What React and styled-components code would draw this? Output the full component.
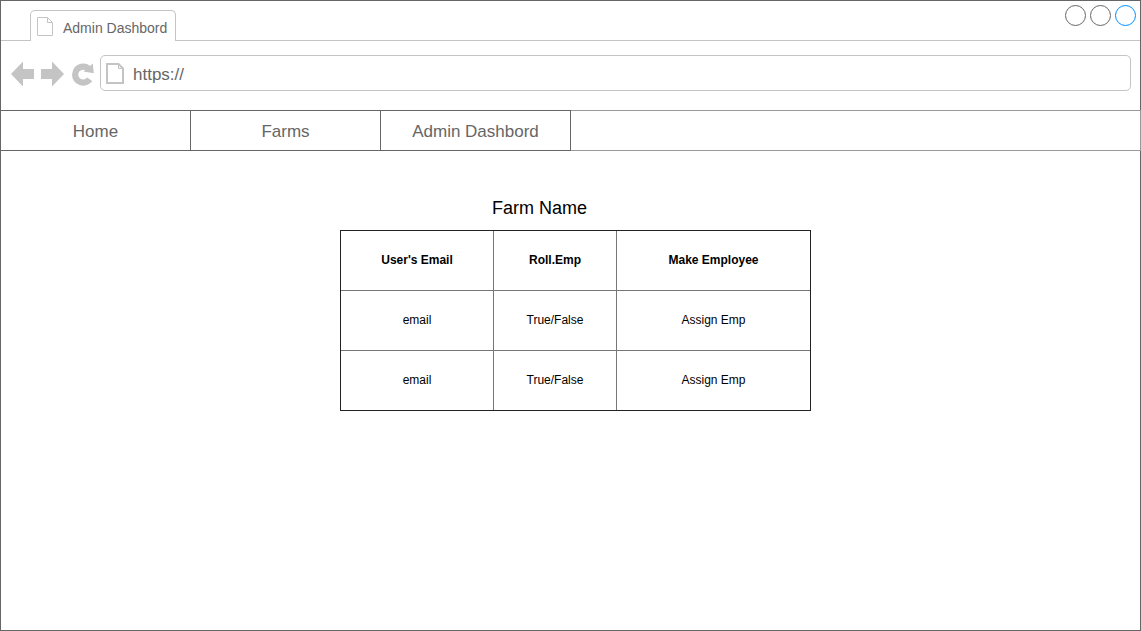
import React from "react";
import styled, { createGlobalStyle } from "styled-components";

const ink = "#666666";
const pale = "#c4c4c4";

const GlobalStyle = createGlobalStyle`
  *, *::before, *::after { box-sizing: border-box; }
  body {
    margin: 0;
    background: #ffffff;
    font-family: "Liberation Sans", Arial, Helvetica, sans-serif;
  }
`;

const BrowserFrame = styled.div`
  display: flex;
  flex-direction: column;
  min-height: 100vh;
  border: 1px solid ${ink};
  background: #ffffff;
`;

const TitleBar = styled.header`
  display: flex;
  justify-content: space-between;
  align-items: flex-end;
  height: 40px;
  padding: 0 4px 0 29px;
  border-bottom: 1px solid ${pale};
`;

const Tab = styled.div`
  display: flex;
  align-items: center;
  gap: 10px;
  height: 31px;
  margin-bottom: -1px;
  padding: 3px 8px 0 6px;
  border: 1px solid ${pale};
  border-bottom: 0;
  border-radius: 5px 5px 0 0;
  background: #ffffff;
  color: ${ink};
  font-size: 14px;
  line-height: 16px;
  white-space: nowrap;

  svg { margin-top: -3px; }
`;

const WindowControls = styled.div`
  display: flex;
  align-self: flex-start;
  gap: 4px;
  padding-top: 4px;
`;

const WindowButton = styled.button`
  width: 21px;
  height: 21px;
  padding: 0;
  border: 1px solid ${(p) => (p.$accent ? "#008cff" : ink)};
  border-radius: 50%;
  background: #ffffff;
`;

const Toolbar = styled.div`
  display: flex;
  align-items: center;
  gap: 6px;
  padding: 14px 9px 19px 10px;
`;

const ToolButton = styled.button`
  display: flex;
  flex: none;
  padding: 2px 0 0;
  border: 0;
  background: none;
  color: ${pale};
`;

const AddressBar = styled.label`
  display: flex;
  flex: 1;
  align-items: center;
  gap: 9px;
  min-width: 0;
  height: 36px;
  padding: 0 6px 0 5px;
  border: 1px solid ${pale};
  border-radius: 5px;
`;

const AddressInput = styled.input`
  flex: 1;
  min-width: 0;
  padding: 3px 0 0;
  border: 0;
  outline: 0;
  background: none;
  color: ${ink};
  font: 17px/20px "Liberation Sans", Arial, Helvetica, sans-serif;
`;

const Nav = styled.nav`
  display: flex;
  height: 41px;
  margin: 0 -1px;
  border: 1px solid #999999;
`;

const NavLink = styled.a`
  display: flex;
  flex: 0 1 191px;
  align-items: center;
  justify-content: center;
  margin: -1px 0 -1px -1px;
  padding-top: 2px;
  border: 1px solid ${ink};
  color: ${ink};
  font-size: 17px;
  line-height: 20px;
  text-decoration: none;
`;

const Content = styled.main`
  display: flex;
  flex: 1;
  justify-content: center;
  align-items: flex-start;
  padding: 46px 0 24px 10px;
`;

const FarmTable = styled.table`
  width: 471px;
  table-layout: fixed;
  border: 1px solid #222222;
  border-collapse: separate;
  border-spacing: 0;
  color: #000000;
  font-size: 12px;
  line-height: 14px;
`;

const Caption = styled.caption`
  padding: 0 0 11px 152px;
  font-size: 18px;
  line-height: 22px;
  text-align: left;
`;

const Column = styled.col`
  width: ${(p) => p.$width}px;
`;

const Row = styled.tr`
  height: 60px;

  thead > & { height: 59px; }

  & > * {
    padding: 0 0 2px;
    text-align: center;
    vertical-align: middle;
  }
  & > * + * { border-left: 1px solid #777777; }
  tbody > & > * { border-top: 1px solid #777777; }
`;

function PageIcon({ width, height, stroke }) {
  return (
    <svg width={width} height={height} viewBox={`0 0 ${width} ${height}`} fill="none" stroke={pale} strokeWidth={stroke} aria-hidden="true">
      <path d={`M${stroke / 2} ${stroke / 2}H${width - 5.5}L${width - stroke / 2} 5.5V${height - stroke / 2}H${stroke / 2}Z`} />
      <path d={`M${width - 5.5} ${stroke / 2}V5.5H${width - stroke / 2}`} strokeWidth="1" />
    </svg>
  );
}

function ArrowIcon({ points }) {
  return (
    <svg width="24" height="26" viewBox="0 0 24 26" fill="currentColor" aria-hidden="true">
      <polygon points={points} />
    </svg>
  );
}

function ReloadIcon() {
  return (
    <svg width="23" height="24" viewBox="-1 0 23 24" aria-hidden="true">
      <path d="M17.7 17.2A8 8 0 1 1 16.9 7" fill="none" stroke="currentColor" strokeWidth="6.2" />
      <path d="M20.8 1.4L21.8 11.2L11.4 9.4Z" fill="currentColor" />
    </svg>
  );
}

const rows = [
  ["email", "True/False", "Assign Emp"],
  ["email", "True/False", "Assign Emp"],
];

export default function App() {
  return (
    <>
      <GlobalStyle />
      <BrowserFrame>
        <TitleBar>
          <Tab>
            <PageIcon width={16} height={19} stroke={1} />
            Admin Dashbord
          </Tab>
          <WindowControls>
            <WindowButton type="button" aria-label="Minimize" />
            <WindowButton type="button" aria-label="Maximize" />
            <WindowButton type="button" aria-label="Close" $accent />
          </WindowControls>
        </TitleBar>
        <Toolbar>
          <ToolButton type="button" aria-label="Back">
            <ArrowIcon points="0,13 12,0.5 12,8 23,8 23,18 12,18 12,25.5" />
          </ToolButton>
          <ToolButton type="button" aria-label="Forward">
            <ArrowIcon points="23,13 11,0.5 11,8 0,8 0,18 11,18 11,25.5" />
          </ToolButton>
          <ToolButton type="button" aria-label="Reload">
            <ReloadIcon />
          </ToolButton>
          <AddressBar>
            <PageIcon width={18} height={21} stroke={2} />
            <AddressInput type="text" aria-label="Address" defaultValue="https://" />
          </AddressBar>
        </Toolbar>
        <Nav>
          <NavLink href="#home">Home</NavLink>
          <NavLink href="#farms">Farms</NavLink>
          <NavLink href="#admin">Admin Dashbord</NavLink>
        </Nav>
        <Content>
          <FarmTable>
            <Caption>Farm Name</Caption>
            <colgroup>
              <Column $width={152} />
              <Column $width={123} />
              <Column $width={194} />
            </colgroup>
            <thead>
              <Row>
                <th scope="col">User's Email</th>
                <th scope="col">Roll.Emp</th>
                <th scope="col">Make Employee</th>
              </Row>
            </thead>
            <tbody>
              {rows.map((cells, r) => (
                <Row key={r}>
                  {cells.map((cell, c) => (
                    <td key={c}>{cell}</td>
                  ))}
                </Row>
              ))}
            </tbody>
          </FarmTable>
        </Content>
      </BrowserFrame>
    </>
  );
}
